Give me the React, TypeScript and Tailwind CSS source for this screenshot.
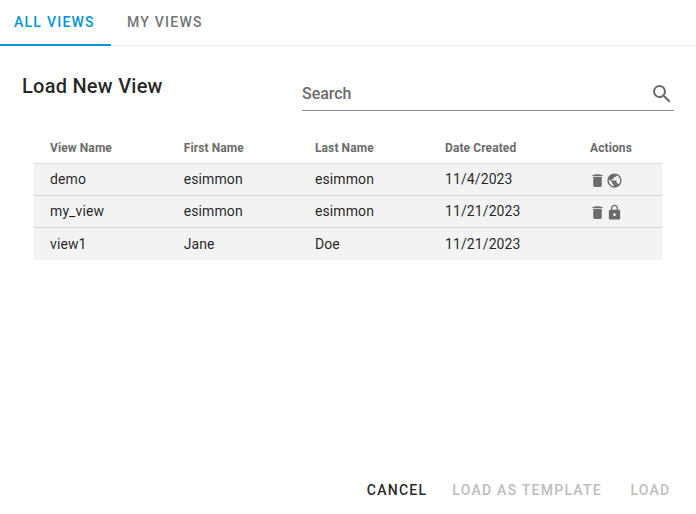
import React from "react";
import { MdDelete, MdLock, MdPublic, MdSearch } from "react-icons/md";

type Row = { view: string; first: string; last: string; date: string; access?: "public" | "private" };

const rows: Row[] = [
  { view: "demo", first: "esimmon", last: "esimmon", date: "11/4/2023", access: "public" },
  { view: "my_view", first: "esimmon", last: "esimmon", date: "11/21/2023", access: "private" },
  { view: "view1", first: "Jane", last: "Doe", date: "11/21/2023" },
];

const columns = "grid grid-cols-[133.75px_131.25px_130px_145px_1fr] items-center pl-4";

export default function App() {
  return (
    <div className="flex h-[514px] w-[696px] flex-col overflow-hidden bg-white font-[Roboto,sans-serif] text-black/87">
      <nav className="flex h-[46px] shrink-0 border-b border-[#f0f0f0] text-sm font-medium tracking-[1.25px]">
        <button className="h-[46px] w-[111px] border-b-2 border-[#0095db] pl-[14px] text-left text-[#0095db]">ALL VIEWS</button>
        <button className="h-[46px] border-b-2 border-transparent pl-4 text-[#757575]">MY VIEWS</button>
      </nav>
      <header className="flex h-[65px] shrink-0 justify-between pr-[22px] pl-[22px]">
        <h1 className="pt-[24px] text-xl leading-8 font-medium tracking-[0.25px]">Load New View</h1>
        <div className="flex w-[372px] items-center justify-between border-b border-[#8c8c8c] pt-[31px] text-base text-[#6b6b6b]">
          <span className="font-medium tracking-[-0.05px]">Search</span>
          <MdSearch className="size-6" />
        </div>
      </header>
      <main className="mx-[34px] mt-[21px]">
        <div className={`${columns} h-8 border-b border-[#ddd] text-xs font-bold tracking-[0.1px] text-[#6b6b6b]`}>
          <span>View Name</span><span>First Name</span><span>Last Name</span><span>Date Created</span><span>Actions</span>
        </div>
        {rows.map((row) => (
          <div key={row.view} className={`${columns} h-8 border-b border-[#d5d5d5] bg-[#f3f3f3] pb-px text-sm tracking-[0.1px] last:border-b-0 last:pb-0`}>
            <span>{row.view}</span><span>{row.first}</span><span>{row.last}</span><span>{row.date}</span>
            <span className="-ml-px flex pt-0.5 text-[#6b6b6b]">
              {row.access && <MdDelete className="size-[17px]" />}
              {row.access === "public" && <MdPublic className="-ml-[0.5px] size-[17px]" />}
              {row.access === "private" && <MdLock className="-ml-[0.5px] size-[17px]" />}
            </span>
          </div>
        ))}
      </main>
      <footer className="mt-auto flex h-[48px] items-center justify-end pr-[25px] text-sm font-medium tracking-[1.25px]">
        <button>CANCEL</button>
        <button className="ml-[25px] text-[#bdbdbd]">LOAD AS TEMPLATE</button>
        <button className="ml-[28.5px] pr-[0.5px] text-[#bdbdbd]">LOAD</button>
      </footer>
    </div>
  );
}
